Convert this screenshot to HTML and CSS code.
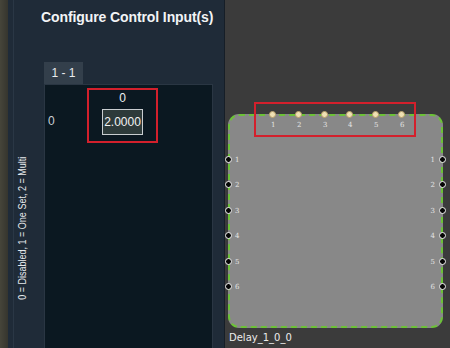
FILE: index.html
```html
<!DOCTYPE html>
<html lang="en">
<head>
    <meta charset="UTF-8">
    <title>Configure Control Input(s)</title>
    <link rel="stylesheet" href="styles.css">
</head>
<body>
    <div class="strip"></div>

    <div class="panel">
        <div class="panel-main">
            <h2 class="title">Configure Control Input(s)</h2>
            <div class="panel-body">
                <div class="legend">
                    <span>0 = Disabled, 1 = One Set, 2 = Multi</span>
                </div>
                <div class="grid-wrap">
                    <div class="tab">1 - 1</div>
                    <div class="grid">
                        <div class="row-label">0</div>
                        <div class="cell">
                            <div class="col-head">0</div>
                            <div class="value">2.0000</div>
                        </div>
                    </div>
                </div>
            </div>
        </div>
    </div>

    <div class="canvas">
        <div class="node">
            <!-- top ports -->
            <div class="port top" style="left: 39px"><span>1</span></div>
            <div class="port top" style="left: 65px"><span>2</span></div>
            <div class="port top" style="left: 91px"><span>3</span></div>
            <div class="port top" style="left: 116px"><span>4</span></div>
            <div class="port top" style="left: 142px"><span>5</span></div>
            <div class="port top" style="left: 168px"><span>6</span></div>

            <!-- left ports -->
            <div class="port side left" style="top: 40px"><span>1</span></div>
            <div class="port side left" style="top: 65px"><span>2</span></div>
            <div class="port side left" style="top: 91px"><span>3</span></div>
            <div class="port side left" style="top: 116px"><span>4</span></div>
            <div class="port side left" style="top: 142px"><span>5</span></div>
            <div class="port side left" style="top: 167px"><span>6</span></div>

            <!-- right ports -->
            <div class="port side right" style="top: 40px"><span>1</span></div>
            <div class="port side right" style="top: 65px"><span>2</span></div>
            <div class="port side right" style="top: 91px"><span>3</span></div>
            <div class="port side right" style="top: 116px"><span>4</span></div>
            <div class="port side right" style="top: 142px"><span>5</span></div>
            <div class="port side right" style="top: 167px"><span>6</span></div>
        </div>
        <div class="mark"></div>
        <div class="node-name">Delay_1_0_0</div>
    </div>
</body>
</html>
```

FILE: styles.css
```css
html, body {
    margin: 0;
    padding: 0;
}
body {
    width: 450px;
    height: 348px;
    overflow: hidden;
    display: flex;
    font-family: "Liberation Sans", Arial, sans-serif;
    background-color: #3b3b3b;
}
.strip {
    width: 8px;
    background: linear-gradient(to right, #46453a, #35352e);
}
.panel {
    width: 216px;
    background-color: #1f2b38;
    border-right: 1px solid #161e27;
}
.panel-main {
    height: 100%;
    margin-left: 5px;
    border-left: 1px solid #2a3745;
    display: flex;
    flex-direction: column;
}
.title {
    margin: 0;
    padding: 8px 0 0 27px;
    font-size: 14px;
    font-weight: bold;
    color: #f2f4f6;
    line-height: 18px;
    letter-spacing: -0.1px;
}
.panel-body {
    flex: 1;
    display: flex;
    margin-top: 36px;
}
.legend {
    width: 30px;
    display: flex;
    align-items: flex-end;
    justify-content: center;
    padding-bottom: 32px;
}
.legend span {
    writing-mode: vertical-rl;
    transform: rotate(180deg) scaleY(0.82);
    font-size: 11px;
    color: #e6e9ec;
    white-space: nowrap;
    margin-right: 14px;
}
.grid-wrap {
    width: 169px;
    display: flex;
    flex-direction: column;
}
.tab {
    width: 39px;
    height: 22px;
    line-height: 23px;
    background-color: #333f4b;
    color: #e8ebee;
    font-size: 12px;
    text-align: center;
}
.grid {
    flex: 1;
    background-color: #0b1821;
    border: 1px solid #2a3643;
    border-bottom: none;
    display: flex;
    align-items: flex-start;
}
.row-label {
    width: 42px;
    padding: 29px 0 0 3px;
    box-sizing: border-box;
    font-size: 12px;
    color: #c8ced4;
}
.cell {
    margin-top: 3px;
    width: 71px;
    height: 55px;
    box-sizing: border-box;
    border: 2px solid #d3202c;
    display: flex;
    flex-direction: column;
    align-items: center;
}
.col-head {
    font-size: 12px;
    color: #eef0f2;
    line-height: 14px;
    margin-top: 1px;
}
.value {
    margin-top: 4px;
    width: 41px;
    height: 26px;
    box-sizing: border-box;
    border: 1px solid #c9cdd0;
    background-color: #2d3a3a;
    color: #f2f2f2;
    font-size: 12px;
    line-height: 24px;
    text-align: center;
}
.canvas {
    flex: 1;
    position: relative;
    background-color: #3b3b3b;
}
.node {
    position: absolute;
    left: 3px;
    top: 114px;
    width: 215px;
    height: 214px;
    box-sizing: border-box;
    border: 2px dashed #6cc238;
    border-radius: 11px;
    background-color: #888888;
}
.port {
    position: absolute;
    width: 7px;
    height: 7px;
    box-sizing: border-box;
    border-radius: 50%;
}
.port span {
    position: absolute;
    font-family: "DejaVu Serif", serif;
    font-size: 7px;
    color: #e4e4e4;
    line-height: 8px;
}
.port.top {
    top: -5px;
    background-color: #efe0b4;
    border: 1px solid #b9a06a;
}
.port.top span {
    top: 9px;
    left: 1px;
}
.port.side {
    background-color: #050505;
    border: 1px solid #f4f4f4;
}
.port.left {
    left: -5px;
}
.port.left span {
    left: 9px;
    top: -1px;
}
.port.right {
    right: -5px;
}
.port.right span {
    right: 10px;
    top: -1px;
}
.mark {
    position: absolute;
    left: 29px;
    top: 102px;
    width: 162px;
    height: 35px;
    box-sizing: border-box;
    border: 2px solid #d3202c;
}
.node-name {
    position: absolute;
    left: 4px;
    top: 332px;
    font-family: "DejaVu Sans", sans-serif;
    font-size: 10px;
    color: #ececec;
}
```
